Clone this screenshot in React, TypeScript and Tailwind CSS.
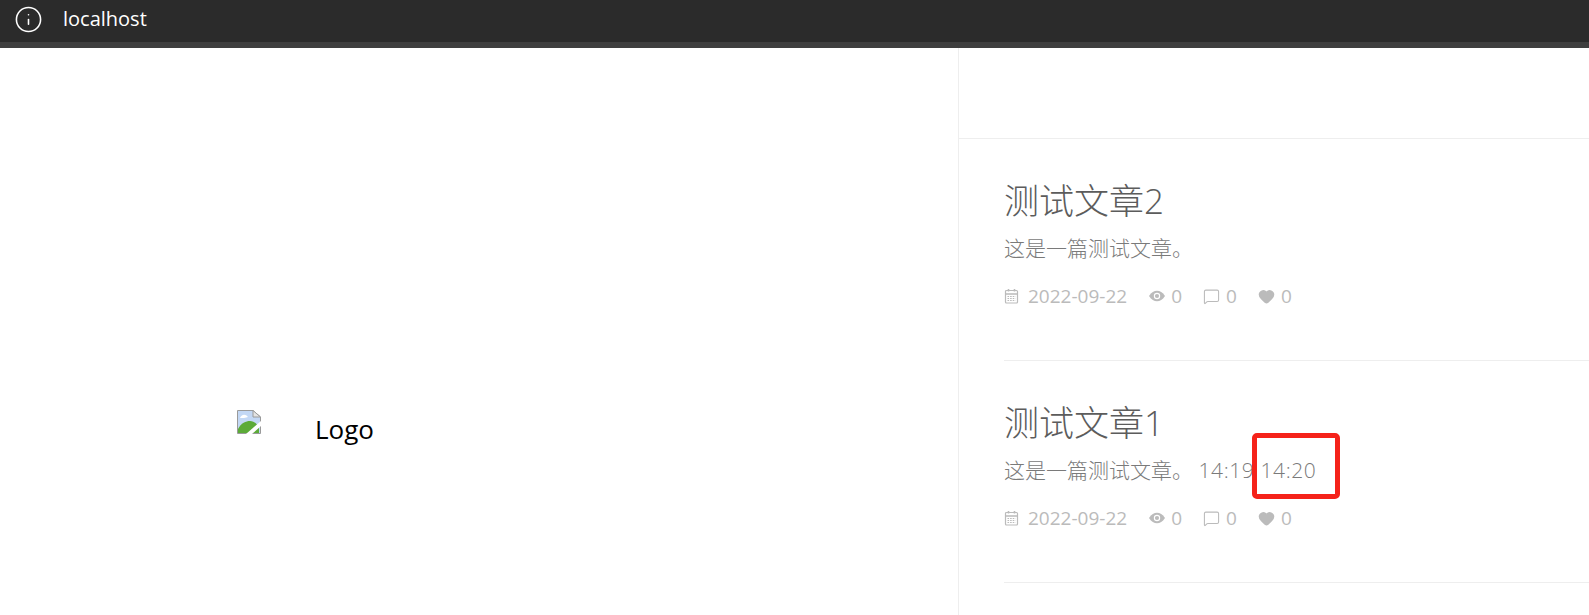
import { Heart, Info, MessageSquare } from "lucide-react";

const cjk = { fontFamily: '"Open Sans", "Noto Sans CJK SC", sans-serif' };

function CalendarIcon() {
  return (
    <svg width="15" height="16" viewBox="0 0 15 16" fill="none" stroke="#bbbbbb" strokeWidth="1.2">
      <rect x="1.5" y="2.5" width="12" height="12.5" rx="1" />
      <path d="M1.5 6h12M4.5 1v2.5M10.5 1v2.5" strokeWidth="1.6" />
      <path d="M3.5 8.5h8M3.5 10.5h8M3.5 12.5h8" strokeDasharray="1.6 1" />
    </svg>
  );
}

function EyeIcon() {
  return (
    <svg className="ml-[22px]" width="16" height="12" viewBox="0 0 17 12">
      <path d="M0 6C2.5 2 5.5 0.5 8.5 0.5S14.5 2 17 6C14.5 10 11.5 11.5 8.5 11.5S2.5 10 0 6Z" fill="#bbbbbb" />
      <circle cx="8.5" cy="6" r="3.4" fill="#ffffff" />
      <circle cx="8.5" cy="6" r="2.2" fill="#bbbbbb" />
    </svg>
  );
}

function BrokenImage() {
  return (
    <svg width="24" height="24" viewBox="0 0 24 24">
      <path d="M0.5 0.5H16L23.5 7V23.5H0.5Z" fill="#c3d8f5" stroke="#9a9a9a" />
      <path d="M16 0.5V7H23.5Z" fill="#e4e4e4" stroke="#9a9a9a" />
      <path d="M1 23V19C4 13 9 11 13 11C17 11 20 14 22 17V23Z" fill="#5cab38" />
      <path d="M3 8C4 5 8 3 11 7C9 8 5 8 3 8Z" fill="#ffffff" />
      <path d="M24 11L9 24H15L24 16Z" fill="#ffffff" />
    </svg>
  );
}

function Meta() {
  return (
    <div className="flex items-center text-[19px] leading-6 text-[#bbbbbb]">
      <CalendarIcon />
      <span className="ml-[9px]">2022-09-22</span>
      <EyeIcon />
      <span className="ml-[6px]">0</span>
      <MessageSquare className="ml-[21px]" size={17} stroke="#bbbbbb" strokeWidth={1.5} />
      <span className="ml-[6px]">0</span>
      <Heart className="ml-[21px]" size={17} fill="#bbbbbb" stroke="#bbbbbb" />
      <span className="ml-[6px]">0</span>
    </div>
  );
}

function Post({ title, children }: { title: string; children: React.ReactNode }) {
  return (
    <article className="h-[222px] border-b border-[#eeeeee] pt-[37px]">
      <h2 className="text-[35px] leading-[50px] font-light text-[#5c5c5c]">{title}</h2>
      <p className="mt-[7px] text-[21px] leading-[30px] font-light text-[#7a7a7a]">{children}</p>
      <div className="mt-[21px]">
        <Meta />
      </div>
    </article>
  );
}

export default function App() {
  return (
    <div className="relative h-[615px] w-[1589px] overflow-hidden bg-white" style={cjk}>
      <header className="flex h-[48px] items-start border-b-[6px] border-[#3f3f3f] bg-[#2b2b2b] pl-[14px] text-white">
        <Info className="mt-[5px]" size={29} strokeWidth={1.3} />
        <span className="mt-[7px] ml-[20px] text-[20px] leading-6" style={{ fontFamily: '"Open Sans", sans-serif' }}>
          localhost
        </span>
      </header>
      <main className="flex h-[567px]">
        <section className="flex w-[958px] shrink-0 items-start pt-[362px] pl-[237px] text-black">
          <BrokenImage />
          <span className="mt-[3px] ml-[54px] text-[26px] leading-8" style={{ fontFamily: '"Open Sans", sans-serif' }}>
            Logo
          </span>
        </section>
        <section className="flex-1 border-l border-[#eeeeee]">
          <div className="h-[91px] border-b border-[#eeeeee]" />
          <div className="pl-[45px]">
            <Post title="测试文章2">这是一篇测试文章。</Post>
            <Post title="测试文章1">
              这是一篇测试文章。 <span className="tracking-[0.6px]">14:19 14:20</span>
            </Post>
          </div>
        </section>
      </main>
      <div className="absolute top-[433px] left-[1252px] h-[66px] w-[88px] rounded-[5px] border-[5px] border-[#f5221a]" />
    </div>
  );
}
